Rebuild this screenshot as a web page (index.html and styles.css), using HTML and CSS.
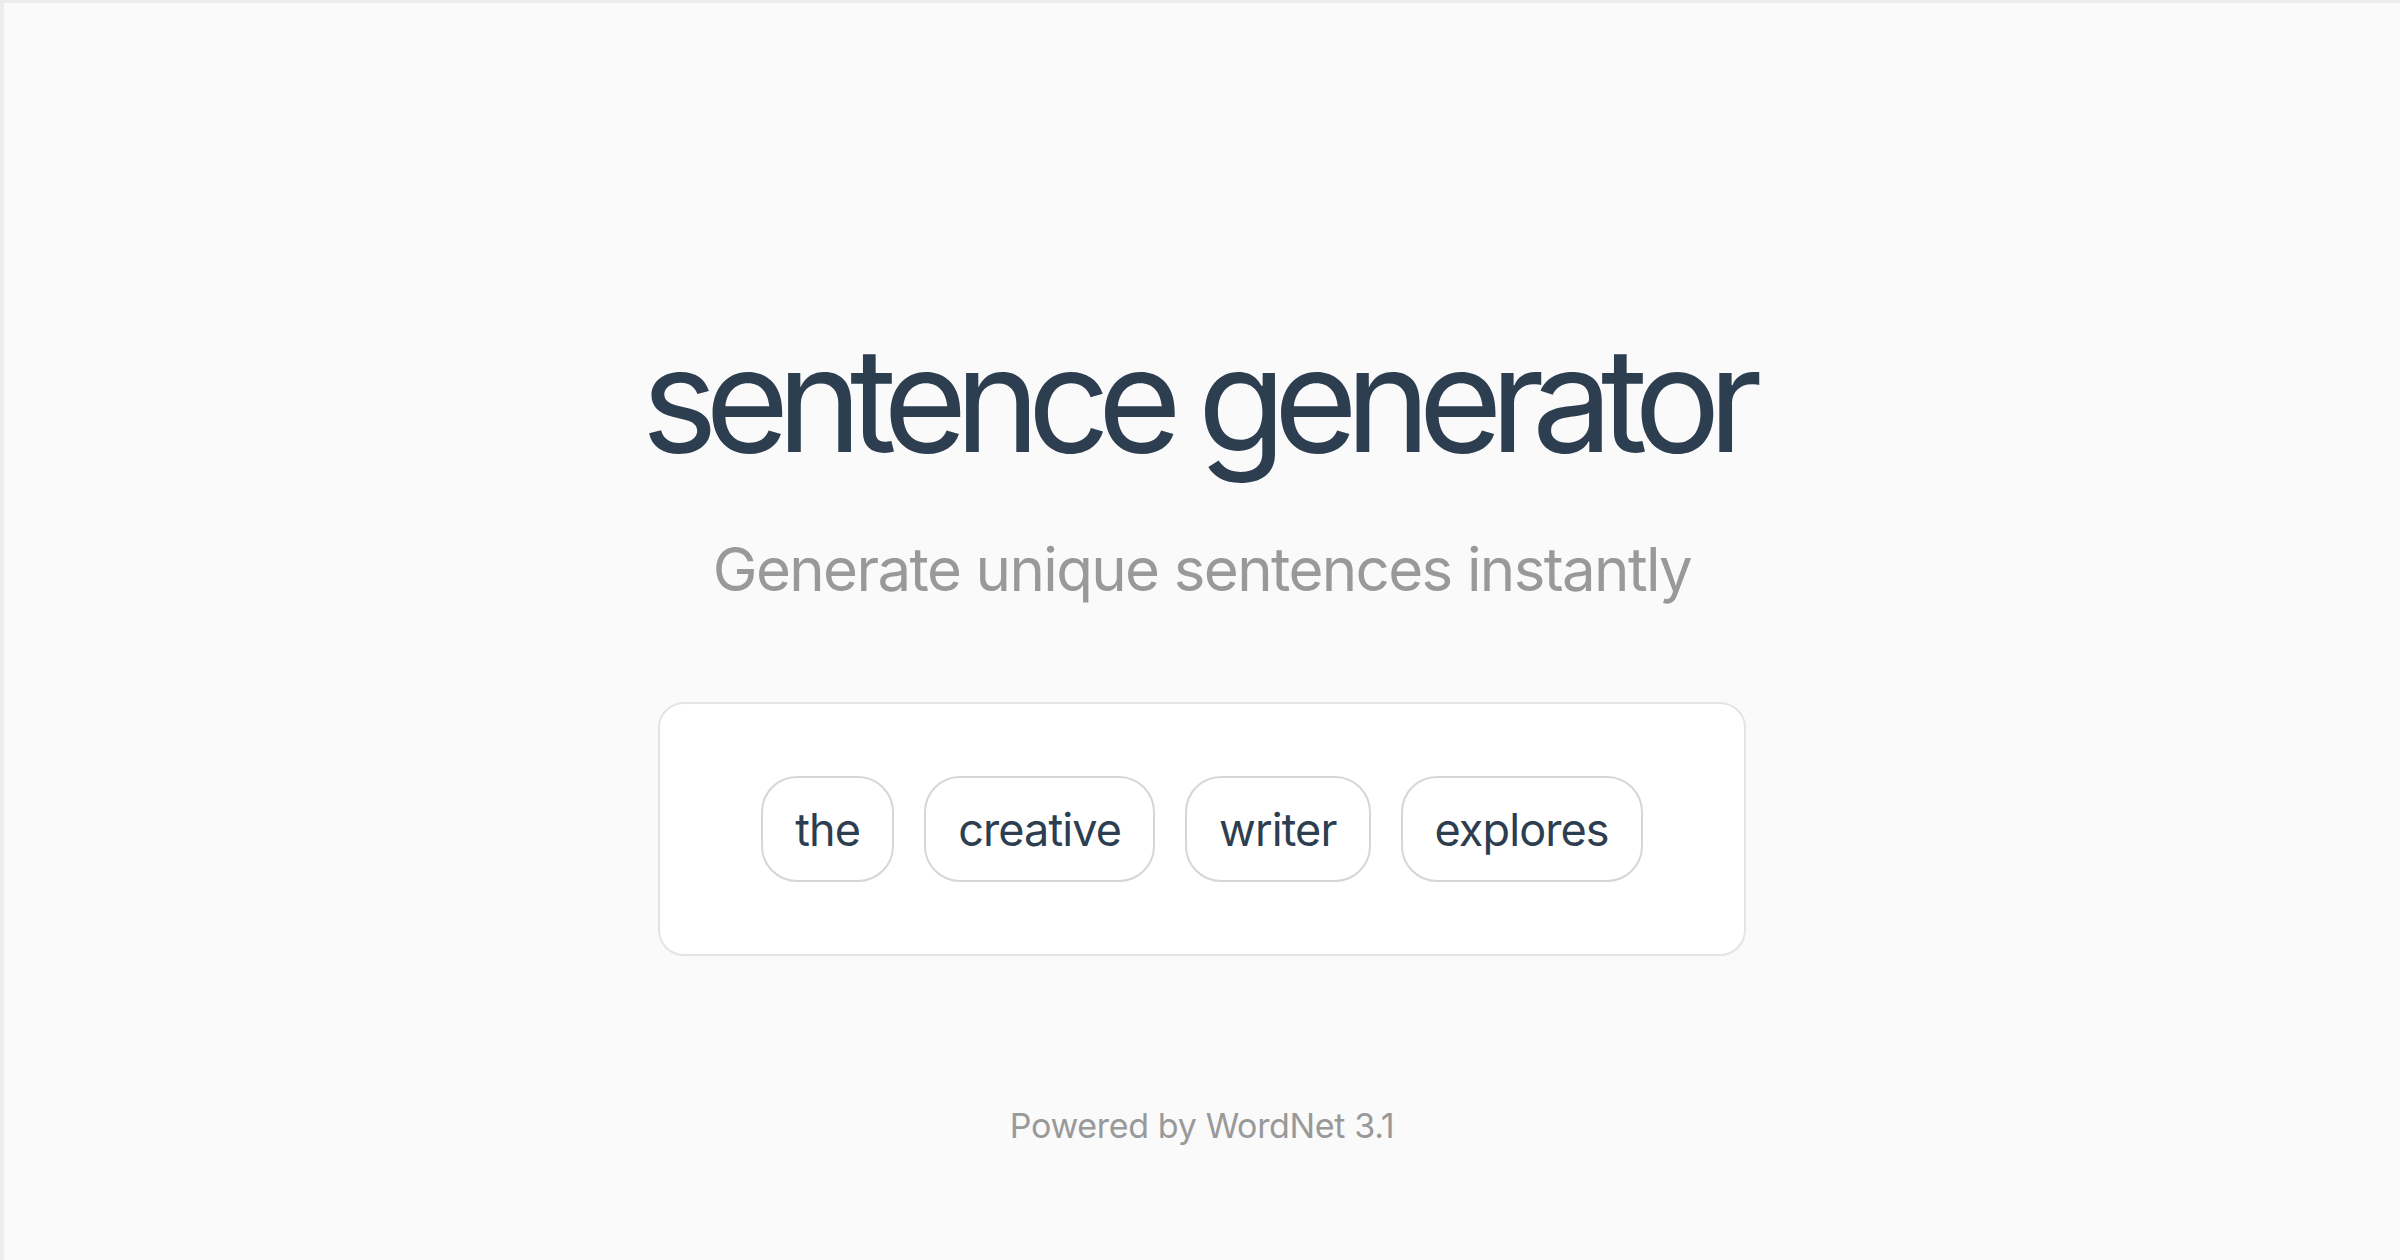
FILE: index.html
```html
<!DOCTYPE html>
<html lang="en">
<head>
<meta charset="utf-8">
<title>sentence generator</title>
<link rel="stylesheet" href="styles.css">
</head>
<body>
<div class="frame">
  <main class="page">
    <h1 class="title">sentence generator</h1>
    <p class="subtitle">Generate unique sentences instantly</p>
    <section class="card">
      <span class="chip">the</span>
      <span class="chip">creative</span>
      <span class="chip">writer</span>
      <span class="chip">explores</span>
    </section>
    <footer class="footer">Powered by WordNet 3.1</footer>
  </main>
</div>
</body>
</html>
```

FILE: styles.css
```css
html, body {
  margin: 0;
  padding: 0;
  height: 100%;
}
body {
  background: #fafafa;
  font-family: Inter, "Noto Sans", "Liberation Sans", sans-serif;
}
.frame {
  box-sizing: border-box;
  min-height: 100%;
  border-top: 3px solid #ececec;
  border-left: 4px solid #ececec;
}
.page {
  display: flex;
  flex-direction: column;
  align-items: center;
  padding-top: 325px;
}
.title {
  margin: 0;
  padding-right: 0.085em;
  font-size: 144px;
  line-height: 1;
  font-weight: 400;
  color: #2c3e50;
  letter-spacing: -0.085em;
}
.subtitle {
  margin: 67px 0 0;
  font-size: 60px;
  line-height: 1;
  font-weight: 400;
  color: #999999;
  letter-spacing: -0.027em;
}
.card {
  box-sizing: border-box;
  margin-top: 103px;
  width: 1088px;
  height: 254px;
  background: #ffffff;
  border: 2px solid #e4e4e4;
  border-radius: 26px;
  display: flex;
  justify-content: center;
  align-items: center;
  gap: 30px;
}
.chip {
  box-sizing: border-box;
  height: 106px;
  padding: 0 32px;
  display: flex;
  align-items: center;
  border: 2px solid #d6d6d6;
  border-radius: 36px;
  font-size: 45px;
  line-height: 1;
  color: #2c3e50;
  background: #ffffff;
  letter-spacing: -0.02em;
}
.footer {
  margin-top: 153px;
  font-size: 34px;
  line-height: 1;
  color: #999999;
  letter-spacing: -0.01em;
}
```
